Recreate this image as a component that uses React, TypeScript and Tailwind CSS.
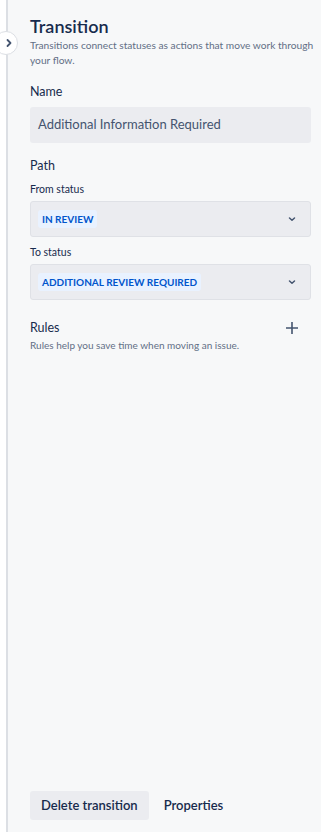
import React from "react";

const Chevron = () => (
  <svg width="12" height="12" viewBox="0 0 24 24" fill="none">
    <path d="M7 10l5 4.5L17 10" stroke="#44546f" strokeWidth="3" strokeLinecap="round" strokeLinejoin="round" />
  </svg>
);

export default function App() {
  return (
    <div className="relative flex h-[832px] w-[321px] overflow-hidden bg-white" style={{ fontFamily: 'Lato, "Noto Sans", sans-serif' }}>
      <div className="w-[6px] shrink-0 bg-white" />
      <div className="flex min-w-0 flex-1 flex-col border-l-2 border-[#dcdfe4] bg-[#f7f8f9] pl-[22px] pr-[10px]">
        <div className="pt-[14px]">
          <h1 className="text-[18px] font-semibold leading-[24px] text-[#172b4d]">Transition</h1>
          <p className="mt-[0px] text-[10.2px] leading-[15px] text-[#626f86]">
            <span className="whitespace-nowrap">Transitions connect statuses as actions that move work through</span>
            <br />
            your flow.
          </p>
        </div>
        <div className="mt-[16px] text-[12.5px] leading-[16px] text-[#172b4d]">Name</div>
        <div className="mt-[7px] flex h-[36px] items-center rounded-[3px] bg-[#ebecf0] px-[8px] text-[13px] text-[#44546f]">
          Additional Information Required
        </div>
        <div className="mt-[15px] text-[12.5px] leading-[16px] text-[#172b4d]">Path</div>
        <div className="mt-[8px] text-[10.5px] leading-[14px] text-[#172b4d]">From status</div>
        <div className="mt-[5px] flex h-[36px] items-center justify-between rounded-[3px] border border-[#dfe1e6] bg-[#ebecf0] pl-[7px] pr-[12px]">
          <span className="rounded-[3px] bg-[#e9f2ff] px-[4px] text-[10px] font-bold leading-[18px] text-[#0055cc]">IN REVIEW</span>
          <Chevron />
        </div>
        <div className="mt-[8px] text-[10.5px] leading-[14px] text-[#172b4d]">To status</div>
        <div className="mt-[5px] flex h-[36px] items-center justify-between rounded-[3px] border border-[#dfe1e6] bg-[#ebecf0] pl-[7px] pr-[12px]">
          <span className="rounded-[3px] bg-[#e9f2ff] px-[4px] text-[10px] font-bold leading-[18px] text-[#0055cc]">ADDITIONAL REVIEW REQUIRED</span>
          <Chevron />
        </div>
        <div className="mt-[20px] flex items-center justify-between pr-[12px]">
          <span className="text-[12.5px] leading-[16px] text-[#172b4d]">Rules</span>
          <svg width="14" height="14" viewBox="0 0 14 14">
            <path d="M7 1v12M1 7h12" stroke="#44546f" strokeWidth="1.6" />
          </svg>
        </div>
        <p className="mt-[2px] text-[10px] leading-[14px] text-[#626f86]">Rules help you save time when moving an issue.</p>
        <div className="flex-1" />
        <div className="mb-[12px] flex items-center gap-[3px]">
          <button className="h-[29px] rounded-[3px] bg-[#ebecf0] px-[11px] text-[13px] font-semibold text-[#172b4d]">Delete transition</button>
          <button className="h-[29px] rounded-[3px] px-[12px] text-[13px] font-semibold text-[#172b4d]">Properties</button>
        </div>
      </div>
      <div className="absolute left-[-6px] top-[31px] flex h-[24px] w-[24px] items-center justify-center rounded-full border border-[#dcdfe4] bg-white">
        <svg width="10" height="10" viewBox="0 0 10 10" className="ml-[5px]">
          <path d="M3.5 2l3 3-3 3" stroke="#44546f" strokeWidth="1.8" fill="none" strokeLinecap="round" strokeLinejoin="round" />
        </svg>
      </div>
    </div>
  );
}
